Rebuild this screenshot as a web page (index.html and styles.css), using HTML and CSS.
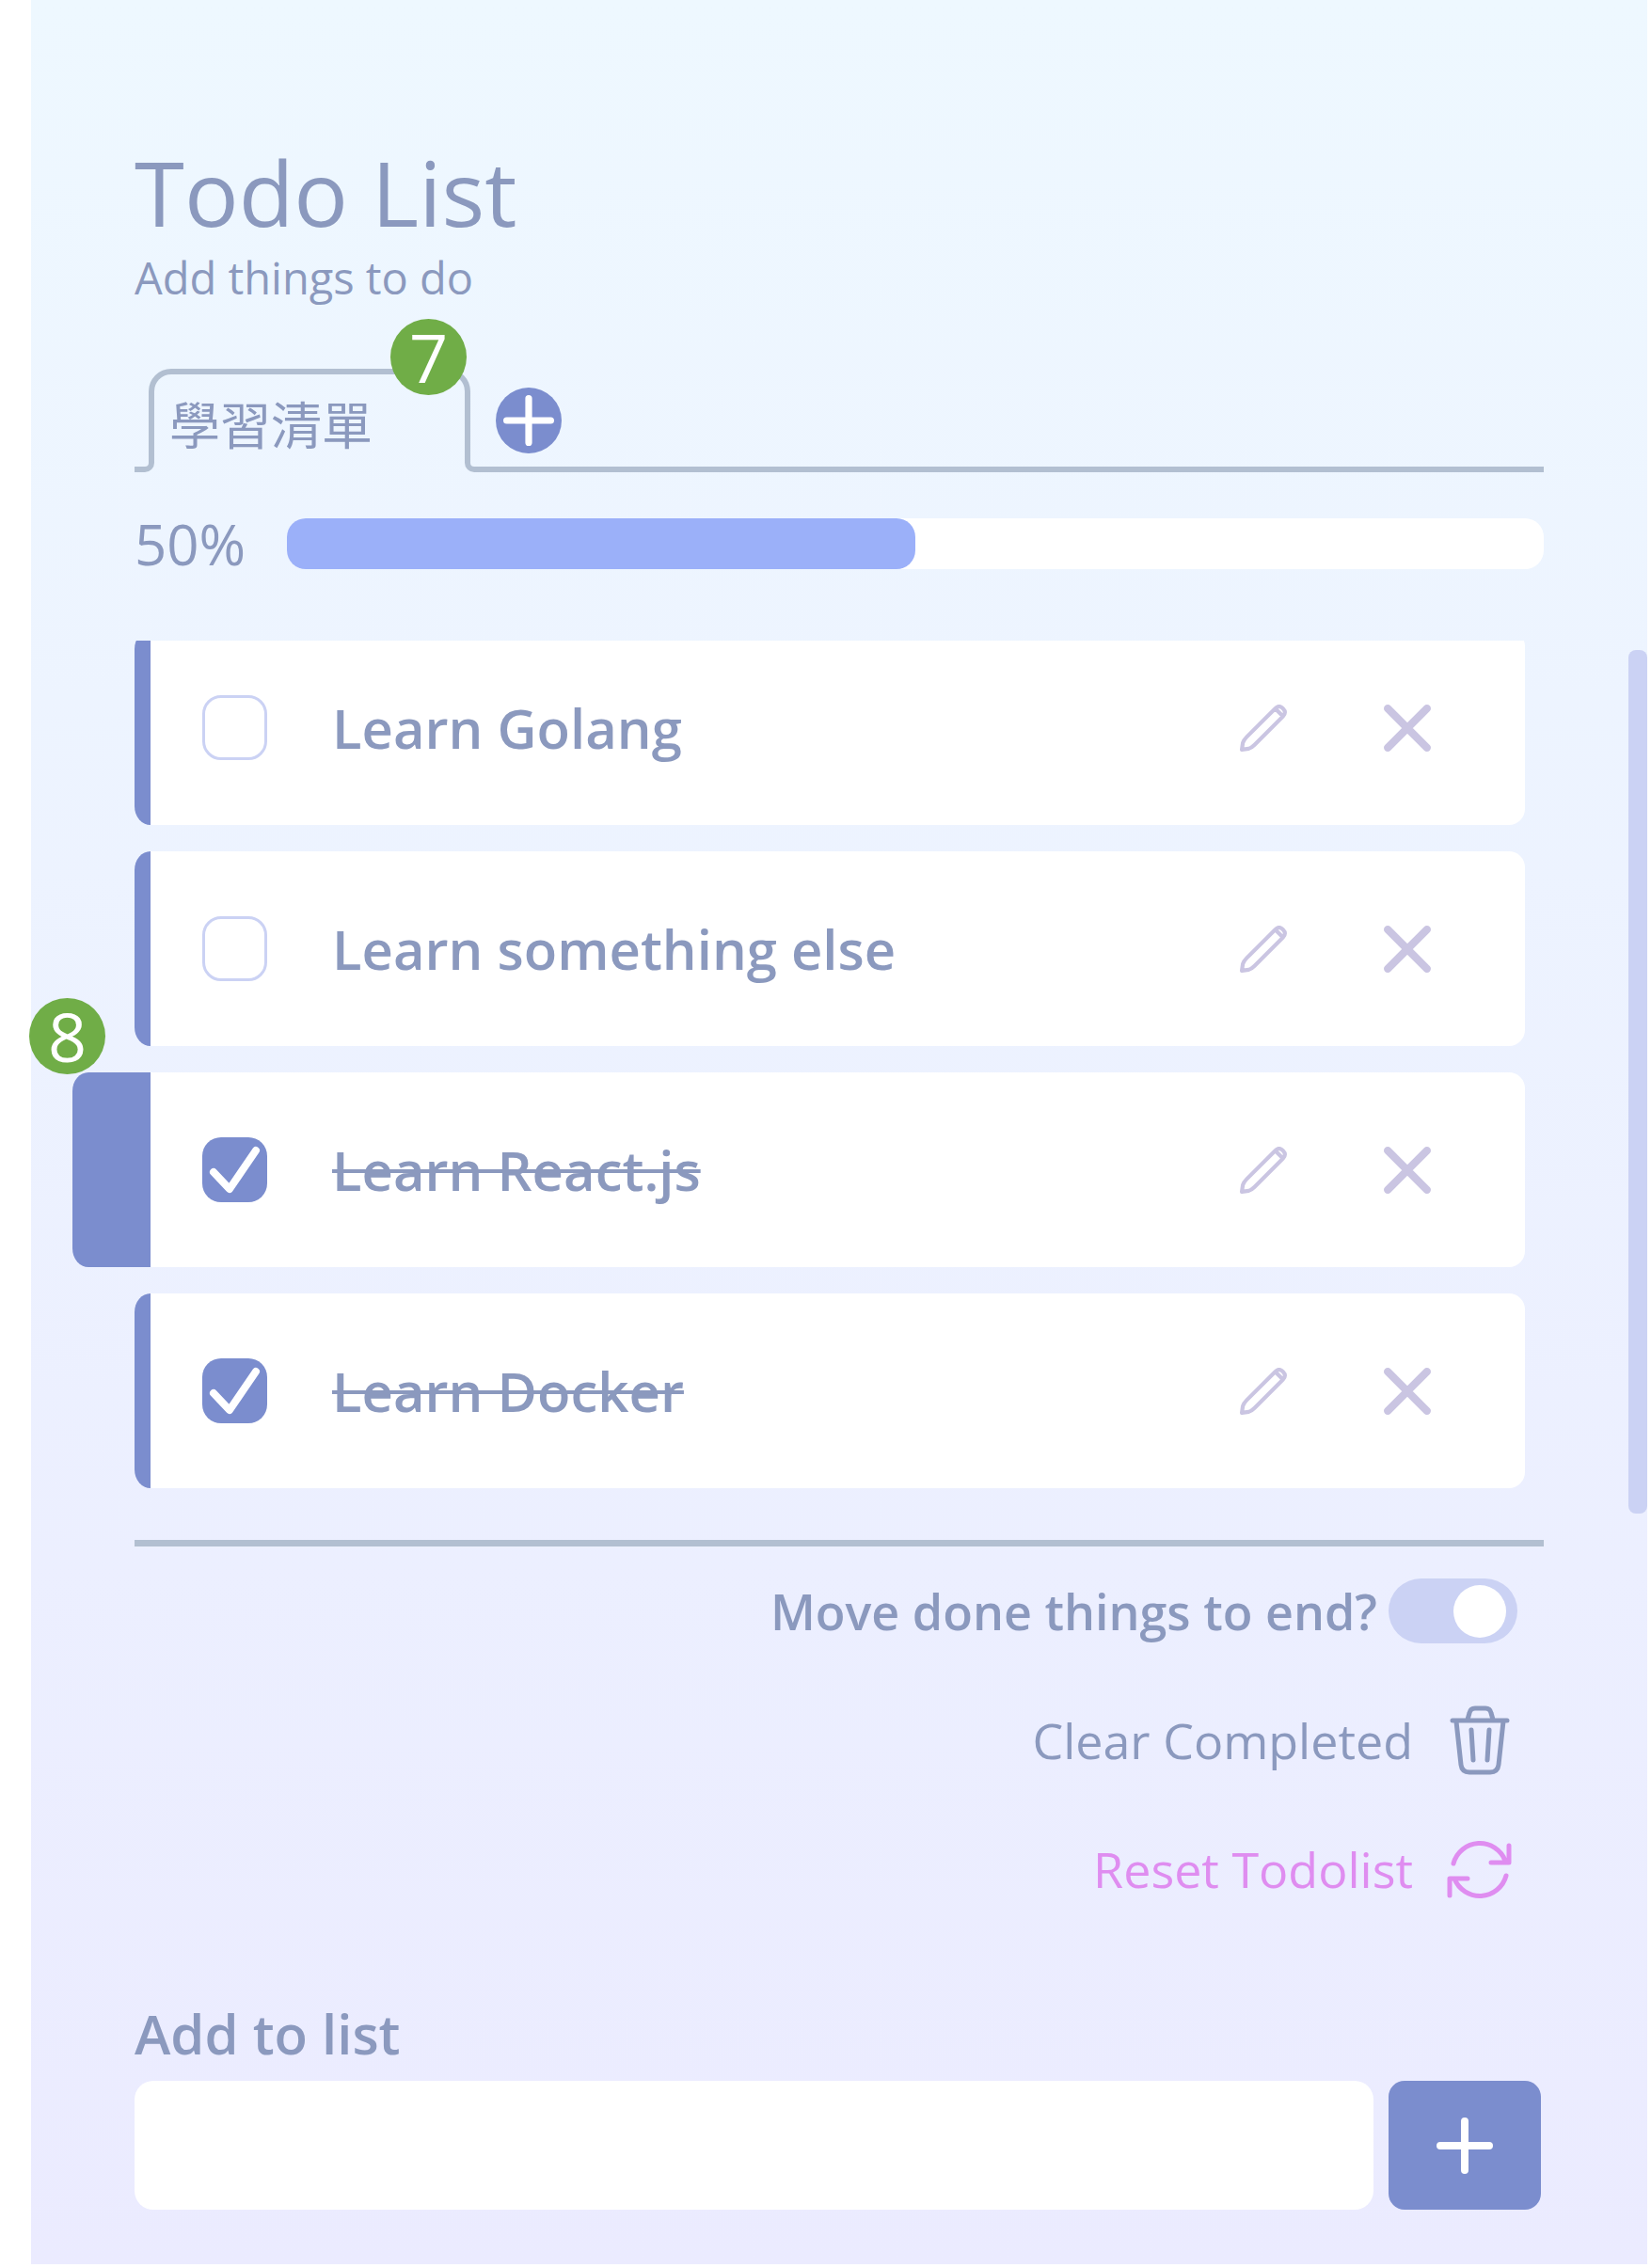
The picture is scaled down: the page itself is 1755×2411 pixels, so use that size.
FILE: index.html
```html
<!DOCTYPE html>
<html lang="en">
<head>
  <meta charset="utf-8">
  <meta name="viewport" content="width=device-width, initial-scale=1">
  <title>Todo List</title>
  <link rel="stylesheet" href="styles.css">
</head>
<body>
  <svg class="sprite" aria-hidden="true">
    <symbol id="icon-pencil" viewBox="0 0 48 48">
      <path d="M2 46 L3 39 Q4 36 7 33 L36 4 Q40 0 44 4 Q48 8 44 12 L15 41 Q12 44 9 45 Z M37 5 L43 11" fill="none" stroke="currentColor" stroke-width="4" stroke-linejoin="round"/>
    </symbol>
    <symbol id="icon-close" viewBox="0 0 48 48">
      <path d="M4 4 L44 44 M44 4 L4 44" fill="none" stroke="currentColor" stroke-width="8" stroke-linecap="round"/>
    </symbol>
    <symbol id="icon-plus" viewBox="0 0 60 60">
      <path d="M30 4 V56 M4 30 H56" fill="none" stroke="currentColor" stroke-width="8" stroke-linecap="round"/>
    </symbol>
  </svg>

  <main class="panel">
    <header>
      <h1 class="title">Todo List</h1>
      <p class="subtitle">Add things to do</p>
    </header>

    <nav class="tabs">
      <span class="tabs-lead"></span>
      <div class="tab">
        <a class="tab-link" href="#list" lang="zh-Hant">學習清單</a>
        <span class="badge badge-tab">7</span>
      </div>
      <div class="tabs-tail">
        <button class="add-tab" type="button" aria-label="Add tab">
          <svg class="add-tab-icon"><use href="#icon-plus"/></svg>
        </button>
      </div>
    </nav>

    <div class="progress">
      <span class="progress-label">50%</span>
      <div class="progress-track"><div class="progress-fill" style="width: 50%"></div></div>
    </div>

    <ul class="list" id="list">
      <li class="item">
        <span class="handle"></span>
        <div class="item-body">
          <input class="check" type="checkbox" id="todo-1">
          <label class="item-label" for="todo-1">Learn Golang</label>
          <button class="icon-button" type="button" aria-label="Edit"><svg class="item-icon"><use href="#icon-pencil"/></svg></button>
          <button class="icon-button" type="button" aria-label="Delete"><svg class="item-icon"><use href="#icon-close"/></svg></button>
        </div>
      </li>
      <li class="item">
        <span class="handle"></span>
        <div class="item-body">
          <input class="check" type="checkbox" id="todo-2">
          <label class="item-label" for="todo-2">Learn something else</label>
          <button class="icon-button" type="button" aria-label="Edit"><svg class="item-icon"><use href="#icon-pencil"/></svg></button>
          <button class="icon-button" type="button" aria-label="Delete"><svg class="item-icon"><use href="#icon-close"/></svg></button>
        </div>
      </li>
      <li class="item">
        <span class="handle handle-open"></span>
        <div class="item-body">
          <input class="check" type="checkbox" id="todo-3" checked>
          <label class="item-label" for="todo-3">Learn React.js</label>
          <button class="icon-button" type="button" aria-label="Edit"><svg class="item-icon"><use href="#icon-pencil"/></svg></button>
          <button class="icon-button" type="button" aria-label="Delete"><svg class="item-icon"><use href="#icon-close"/></svg></button>
        </div>
        <span class="badge badge-item">8</span>
      </li>
      <li class="item">
        <span class="handle"></span>
        <div class="item-body">
          <input class="check" type="checkbox" id="todo-4" checked>
          <label class="item-label" for="todo-4">Learn Docker</label>
          <button class="icon-button" type="button" aria-label="Edit"><svg class="item-icon"><use href="#icon-pencil"/></svg></button>
          <button class="icon-button" type="button" aria-label="Delete"><svg class="item-icon"><use href="#icon-close"/></svg></button>
        </div>
      </li>
    </ul>

    <hr class="rule">

    <div class="actions">
      <div class="action action-toggle">
        <label for="move-done">Move done things to end?</label>
        <input class="toggle" type="checkbox" id="move-done" role="switch" checked>
      </div>
      <button class="action" type="button">
        Clear Completed
        <svg class="action-icon" viewBox="0 0 80 80" fill="none" stroke="currentColor" stroke-width="5" stroke-linecap="round" stroke-linejoin="round">
          <path d="M11 19 H69 M15 20 L20 66 Q21 74 29 74 H51 Q59 74 60 66 L65 20 M27 18 L29 11 Q30 6 35 6 H46 Q51 6 52 11 L54 18 M31 29 L33 61 M50 29 L48 61"/>
        </svg>
      </button>
      <button class="action action-reset" type="button">
        Reset Todolist
        <svg class="action-icon" viewBox="0 0 80 80" fill="none" stroke="currentColor" stroke-width="5" stroke-linecap="round" stroke-linejoin="round">
          <path d="M12 34 A29 29 0 0 1 67 31 M71 15 V33 H52 M68 47 A29 29 0 0 1 13 50 M8 68 V50 H27"/>
        </svg>
      </button>
    </div>

    <form class="add-form">
      <label class="add-label" for="new-todo">Add to list</label>
      <div class="add-row">
        <input class="add-input" type="text" id="new-todo">
        <button class="add-button" type="button" aria-label="Add">
          <svg class="add-icon"><use href="#icon-plus"/></svg>
        </button>
      </div>
    </form>

    <div class="scrollbar"></div>
  </main>
</body>
</html>
```

FILE: styles.css
```css
:root {
  --text: #8b99be;
  --line: #b2bfd1;
  --accent: #7b8dce;
  --soft: #cbd2f4;
  --muted: #cac5e2;
}

* {
  box-sizing: border-box;
}

body {
  margin: 0;
  padding: 0 4px 4px 33px;
  background: #fff;
  color: var(--text);
  font-family: "Open Sans", "Noto Sans CJK TC", sans-serif;
}

button {
  display: flex;
  align-items: center;
  justify-content: center;
  padding: 0;
  border: 0;
  background: none;
  color: inherit;
  font: inherit;
  cursor: pointer;
}

.sprite {
  display: none;
}

.panel {
  position: relative;
  padding: 148px 110px 58px;
  background: linear-gradient(#eef8ff, #ebebff);
}

.title {
  margin: 0;
  font-size: 96px;
  font-weight: 400;
  line-height: 112px;
}

.subtitle {
  margin: 0;
  font-size: 47px;
  line-height: 70px;
}

/* Tabs */

.tabs {
  display: flex;
  height: 110px;
  margin-top: 62px;
}

.tabs-lead {
  align-self: flex-end;
  width: 21px;
  height: 20px;
  border: solid var(--line);
  border-width: 0 6px 6px 0;
  border-bottom-right-radius: 10px;
}

.tab {
  position: relative;
  width: 342px;
  height: 92px;
  margin-left: -6px;
  padding: 16px 0 0 16px;
  border: solid var(--line);
  border-width: 6px 6px 0;
  border-radius: 24px 24px 0 0;
}

.tab-link {
  color: inherit;
  font-size: 54px;
  line-height: 76px;
  text-decoration: none;
}

.tabs-tail {
  position: relative;
  flex: 1;
  margin-left: -6px;
  padding: 20px 0 0 33px;
}

.tabs-tail::before {
  content: "";
  position: absolute;
  inset: auto 0 0;
  height: 20px;
  border: solid var(--line);
  border-width: 0 0 6px 6px;
  border-bottom-left-radius: 10px;
}

.add-tab {
  width: 70px;
  height: 70px;
  border-radius: 50%;
  background: var(--accent);
  color: #fff;
}

.add-tab-icon {
  width: 54px;
  height: 54px;
}

/* Numbered markers */

.badge {
  position: absolute;
  width: 81px;
  height: 81px;
  border-radius: 50%;
  background: #70ad47;
  color: #fff;
  font-size: 72px;
  line-height: 81px;
  text-align: center;
}

.badge-tab {
  top: -59px;
  right: -2px;
}

.badge-item {
  top: -79px;
  left: -112px;
}

/* Progress */

.progress {
  display: flex;
  align-items: center;
  height: 54px;
  margin-top: 49px;
}

.progress-label {
  width: 162px;
  font-size: 60px;
  line-height: 54px;
}

.progress-track {
  flex: 1;
  height: 54px;
  border-radius: 20px;
  background: #fff;
}

.progress-fill {
  height: 100%;
  border-radius: 20px;
  background: #9bb0f9;
}

/* List: scrolled slightly, so the first row is cut at the top */

.list {
  display: flex;
  flex-direction: column;
  gap: 28px;
  margin: 76px 20px 0 -112px;
  padding: 0 0 0 112px;
  overflow: hidden;
  list-style: none;
}

.item {
  position: relative;
  display: flex;
  height: 207px;
}

.item:first-child {
  margin-top: -11px;
}

.handle {
  width: 17px;
  border-radius: 17px 0 0 17px / 20px 0 0 20px;
  background: var(--accent);
}

.handle-open {
  width: 83px;
  margin-left: -66px;
}

.item-body {
  display: flex;
  flex: 1;
  align-items: center;
  padding: 0 100px 0 55px;
  border-radius: 0 17px 17px 0;
  background: #fff;
}

.check {
  appearance: none;
  width: 69px;
  height: 69px;
  margin: 0 69px 0 0;
  border: 3px solid var(--soft);
  border-radius: 20px;
  background: #fff;
}

.check:checked {
  border: 0;
  background: var(--accent) url("data:image/svg+xml,%3Csvg xmlns='http://www.w3.org/2000/svg' viewBox='0 0 69 69'%3E%3Cpath d='M12 37 L29 55 L57 14' fill='none' stroke='white' stroke-width='8' stroke-linecap='round' stroke-linejoin='round'/%3E%3C/svg%3E");
}

.item-label {
  flex: 1;
  font-size: 58px;
  font-weight: 600;
  line-height: 80px;
}

.check:checked + .item-label {
  text-decoration: line-through;
  text-decoration-thickness: 4px;
}

.icon-button {
  color: var(--muted);
}

.icon-button + .icon-button {
  margin-left: 103px;
}

.item-icon {
  width: 50px;
  height: 50px;
}

.rule {
  height: 7px;
  margin: 55px 0 0;
  border: 0;
  background: var(--line);
}

/* Actions */

.actions {
  display: flex;
  flex-direction: column;
  align-items: flex-end;
  gap: 68px;
  margin-top: 34px;
  padding-right: 28px;
}

.action {
  display: flex;
  align-items: center;
  gap: 31px;
  height: 69px;
  font-size: 52px;
  line-height: 69px;
}

.action-toggle {
  gap: 12px;
  font-weight: 600;
}

.action-reset {
  color: #df8df0;
}

.action-icon {
  width: 80px;
  height: 80px;
}

.toggle {
  appearance: none;
  display: flex;
  justify-content: flex-end;
  width: 137px;
  height: 69px;
  margin: 0;
  padding: 7px 12px;
  border-radius: 35px;
  background: var(--soft);
}

.toggle::before {
  content: "";
  width: 56px;
  height: 56px;
  border-radius: 50%;
  background: #fff;
}

/* New entry */

.add-form {
  margin-top: 101px;
}

.add-label {
  display: block;
  font-size: 58px;
  font-weight: 600;
  line-height: 80px;
}

.add-row {
  display: flex;
  gap: 16px;
  margin-top: 10px;
  padding-right: 3px;
}

.add-input {
  flex: 1;
  min-width: 0;
  height: 137px;
  padding: 0 32px;
  border: 0;
  border-radius: 20px;
  background: #fff;
  color: inherit;
  font: inherit;
  font-size: 58px;
}

.add-button {
  width: 162px;
  height: 137px;
  border-radius: 17px;
  background: var(--accent);
  color: #fff;
}

.add-icon {
  width: 60px;
  height: 60px;
}

.scrollbar {
  position: absolute;
  top: 691px;
  right: 0;
  width: 20px;
  height: 918px;
  border-radius: 8px;
  background: var(--soft);
}
```
